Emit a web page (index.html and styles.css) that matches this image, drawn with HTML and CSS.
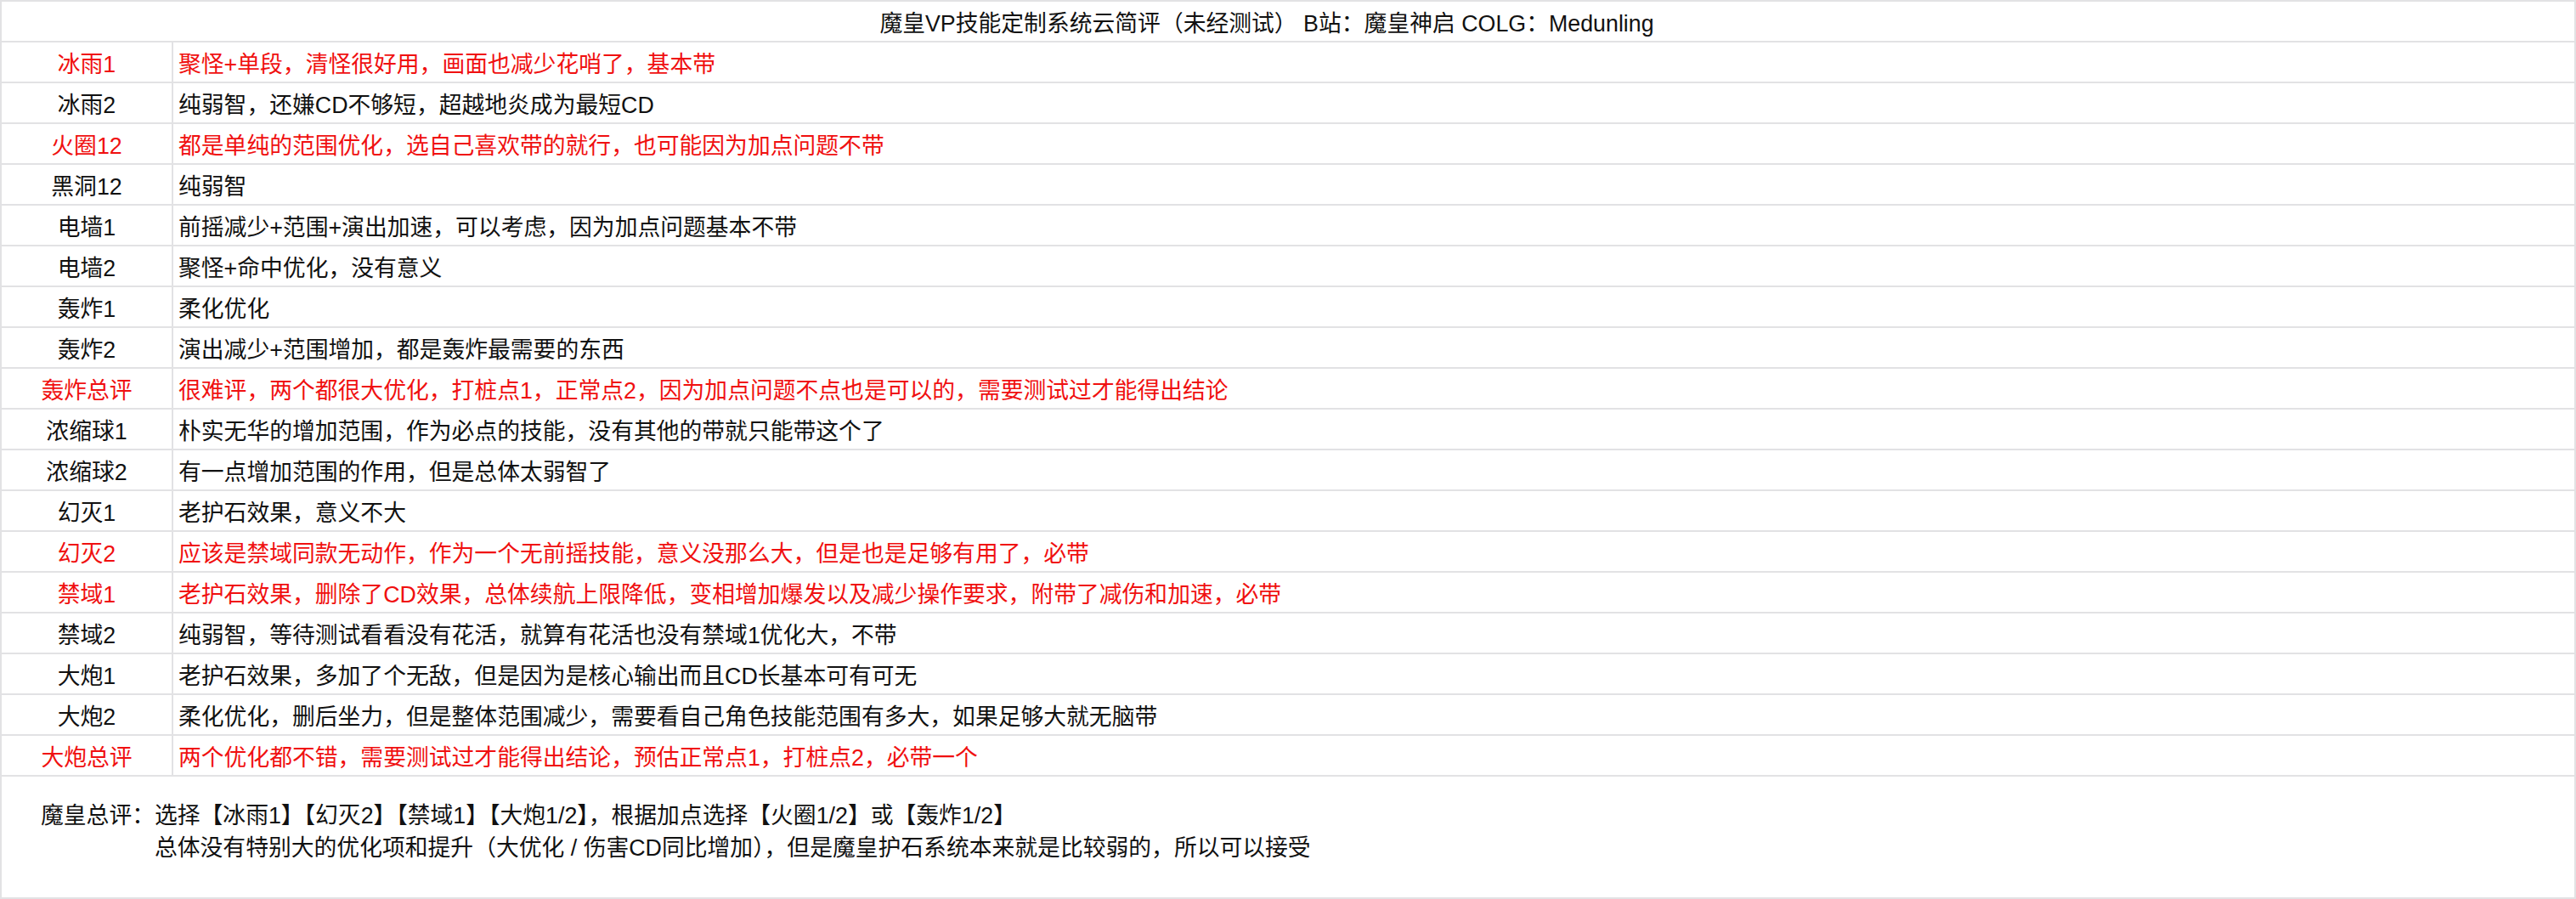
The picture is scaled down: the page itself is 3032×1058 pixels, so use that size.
FILE: index.html
```html
<!DOCTYPE html>
<html lang="zh-CN">
<head>
<meta charset="utf-8">
<title>魔皇VP技能定制系统云简评</title>
<link rel="stylesheet" href="styles.css">
</head>
<body>
<div class="sheet">
  <div class="title">魔皇VP技能定制系统云简评（未经测试） B站：魔皇神启 COLG：Medunling</div>
  <div class="row red"><div class="name">冰雨1</div><div class="desc">聚怪+单段，清怪很好用，画面也减少花哨了，基本带</div></div>
  <div class="row"><div class="name">冰雨2</div><div class="desc">纯弱智，还嫌CD不够短，超越地炎成为最短CD</div></div>
  <div class="row red"><div class="name">火圈12</div><div class="desc">都是单纯的范围优化，选自己喜欢带的就行，也可能因为加点问题不带</div></div>
  <div class="row"><div class="name">黑洞12</div><div class="desc">纯弱智</div></div>
  <div class="row"><div class="name">电墙1</div><div class="desc">前摇减少+范围+演出加速，可以考虑，因为加点问题基本不带</div></div>
  <div class="row"><div class="name">电墙2</div><div class="desc">聚怪+命中优化，没有意义</div></div>
  <div class="row"><div class="name">轰炸1</div><div class="desc">柔化优化</div></div>
  <div class="row"><div class="name">轰炸2</div><div class="desc">演出减少+范围增加，都是轰炸最需要的东西</div></div>
  <div class="row red"><div class="name">轰炸总评</div><div class="desc">很难评，两个都很大优化，打桩点1，正常点2，因为加点问题不点也是可以的，需要测试过才能得出结论</div></div>
  <div class="row"><div class="name">浓缩球1</div><div class="desc">朴实无华的增加范围，作为必点的技能，没有其他的带就只能带这个了</div></div>
  <div class="row"><div class="name">浓缩球2</div><div class="desc">有一点增加范围的作用，但是总体太弱智了</div></div>
  <div class="row"><div class="name">幻灭1</div><div class="desc">老护石效果，意义不大</div></div>
  <div class="row red"><div class="name">幻灭2</div><div class="desc">应该是禁域同款无动作，作为一个无前摇技能，意义没那么大，但是也是足够有用了，必带</div></div>
  <div class="row red"><div class="name">禁域1</div><div class="desc">老护石效果，删除了CD效果，总体续航上限降低，变相增加爆发以及减少操作要求，附带了减伤和加速，必带</div></div>
  <div class="row"><div class="name">禁域2</div><div class="desc">纯弱智，等待测试看看没有花活，就算有花活也没有禁域1优化大，不带</div></div>
  <div class="row"><div class="name">大炮1</div><div class="desc">老护石效果，多加了个无敌，但是因为是核心输出而且CD长基本可有可无</div></div>
  <div class="row"><div class="name">大炮2</div><div class="desc">柔化优化，删后坐力，但是整体范围减少，需要看自己角色技能范围有多大，如果足够大就无脑带</div></div>
  <div class="row red"><div class="name">大炮总评</div><div class="desc">两个优化都不错，需要测试过才能得出结论，预估正常点1，打桩点2，必带一个</div></div>
  <div class="summary">
    <div class="label">魔皇总评：</div>
    <div class="lines">
      <div class="line">选择【冰雨1】【幻灭2】【禁域1】【大炮1/2】，根据加点选择【火圈1/2】或【轰炸1/2】</div>
      <div class="line">总体没有特别大的优化项和提升（大优化 / 伤害CD同比增加），但是魔皇护石系统本来就是比较弱的，所以可以接受</div>
    </div>
  </div>
</div>
</body>
</html>
```

FILE: styles.css
```css
html, body {
  margin: 0;
  padding: 0;
  background: #ffffff;
}

body {
  font-family: "Liberation Sans", "Noto Sans CJK SC", sans-serif;
  font-size: 26.8px;
  color: #111111;
}

.sheet {
  width: 3032px;
  height: 1058px;
  box-sizing: border-box;
  border: 2px solid #e2e2e4;
  display: flex;
  flex-direction: column;
}

.title {
  height: 48px;
  box-sizing: border-box;
  border-bottom: 2px solid #e2e2e4;
  display: flex;
  align-items: center;
  justify-content: center;
  padding-right: 50px;
  white-space: pre;
}

.row {
  height: 48px;
  box-sizing: border-box;
  border-bottom: 2px solid #e2e2e4;
  display: grid;
  grid-template-columns: 202px 1fr;
}

.row.red {
  color: #f01010;
}

.name {
  border-right: 2px solid #e2e2e4;
  display: flex;
  align-items: center;
  justify-content: center;
  white-space: nowrap;
}

.desc {
  display: flex;
  align-items: center;
  padding-left: 6px;
  white-space: nowrap;
}

.summary {
  flex: 1;
  display: flex;
  align-items: center;
  padding-left: 46px;
  padding-bottom: 12px;
}

.label,
.line {
  line-height: 38px;
  white-space: nowrap;
}

.label {
  align-self: center;
  margin-bottom: 38px;
}

.lines {
  display: flex;
  flex-direction: column;
}
```
